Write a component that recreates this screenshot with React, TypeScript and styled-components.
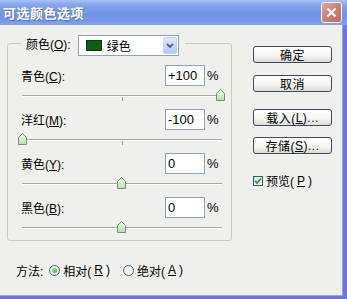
import React from "react";
import styled, { createGlobalStyle } from "styled-components";

const GlobalStyle = createGlobalStyle`
  html, body {
    margin: 0;
    padding: 0;
    background: #efefec;
  }
`;

const Window = styled.div`
  width: 347px;
  height: 299px;
  display: flex;
  flex-direction: column;
  font-family: "Liberation Sans", "Noto Sans CJK SC", sans-serif;
  font-size: 12px;
  color: #000;
  overflow: hidden;
`;

const TitleBar = styled.div`
  height: 25px;
  flex: none;
  display: flex;
  align-items: center;
  justify-content: space-between;
  padding: 0 5px 0 3px;
  box-sizing: border-box;
  background: linear-gradient(to bottom, #a9c2f4 0%, #86a6ec 18%, #7194e4 55%, #7697e6 85%, #8aa8ec 100%);
`;

const Title = styled.span`
  color: #fff;
  font-family: "Noto Sans CJK SC", sans-serif;
  font-weight: bold;
  font-size: 13px;
  letter-spacing: 0.5px;
  text-shadow: 1px 1px 0 #5a74b8;
`;

const CloseButton = styled.div`
  width: 21px;
  height: 21px;
  box-sizing: border-box;
  border: 1px solid #f4f0f4;
  border-radius: 3px;
  background: linear-gradient(135deg, #e3a59c 0%, #cf7f72 50%, #c26a5e 100%);
  display: flex;
  align-items: center;
  justify-content: center;
`;

const Client = styled.div`
  flex: 1;
  display: flex;
  flex-direction: column;
  background: #efefec;
  border-right: 4px solid #6d78d6;
  border-bottom: 3px solid #6d78d6;
  box-shadow: inset -1px -1px 0 #9aa4ea;
`;

const Main = styled.div`
  display: flex;
  align-items: flex-start;
`;

const GroupBox = styled.fieldset`
  margin: 10px 0 0 7px;
  padding: 0 9px 0 13px;
  width: 225px;
  box-sizing: border-box;
  border: 1px solid #c9c9c2;
  border-radius: 3px;
  min-width: 0;
`;

const Legend = styled.legend`
  padding: 0 6px 0 5px;
  height: 16px;
  display: flex;
  align-items: flex-start;
  gap: 7px;
`;

const LegendLabel = styled.span`
  line-height: 21px;
  margin-bottom: -5px;
`;

const Select = styled.div`
  width: 101px;
  height: 21px;
  margin-bottom: -5px;
  box-sizing: border-box;
  border: 1px solid #8aa4c0;
  background: #fff;
  display: flex;
  align-items: center;
  padding: 0 1px 0 7px;
`;

const Swatch = styled.span<{ $color: string }>`
  width: 16px;
  height: 11px;
  background: ${(p) => p.$color};
  border: 1px solid #1d2a1d;
  box-sizing: border-box;
  margin-right: 5px;
`;

const SelectText = styled.span`
  flex: 1;
  font-family: "Noto Sans CJK SC", sans-serif;
`;

const DropButton = styled.span`
  width: 14px;
  height: 17px;
  border-radius: 2px;
  background: linear-gradient(to bottom, #dce7fd, #b5c9f5);
  border: 1px solid #c3d3f8;
  box-sizing: border-box;
  display: flex;
  align-items: center;
  justify-content: center;
`;

const Rows = styled.div`
  display: flex;
  flex-direction: column;
  gap: 1px;
  padding-top: 14px;
`;

const Block = styled.div`
  display: flex;
  flex-direction: column;
`;

const ValueRow = styled.div`
  height: 21px;
  display: flex;
  align-items: center;
`;

const RowLabel = styled.span`
  flex: 1;
`;

const NumberBox = styled.div`
  width: 40px;
  height: 21px;
  box-sizing: border-box;
  border: 1px solid #8aa4c0;
  background: #fff;
  padding: 0 2px;
  display: flex;
  align-items: center;
  font-family: "Liberation Sans", sans-serif;
  font-size: 13px;
`;

const Percent = styled.span`
  width: 15px;
  margin-left: 2px;
  text-align: left;
  font-family: "Liberation Sans", sans-serif;
  font-size: 13px;
`;

const SliderArea = styled.div`
  position: relative;
  height: 22px;
  margin-left: 1px;
  width: 200px;
`;

const Track = styled.div`
  margin-top: 9px;
  height: 1px;
  border-top: 1px solid #a8a8a2;
  background: #fff;
`;

const Tick = styled.span`
  position: absolute;
  left: 100px;
  top: 11px;
  width: 1px;
  height: 4px;
  background: #9a9a94;
`;

const Thumb = styled.svg`
  position: absolute;
  top: 3px;
  width: 9px;
  height: 12px;
`;

const Buttons = styled.div`
  margin-left: 21px;
  padding-top: 21px;
  width: 79px;
  display: flex;
  flex-direction: column;
`;

const Button = styled.div<{ $gap: number }>`
  height: 17px;
  margin-top: ${(p) => p.$gap}px;
  box-sizing: border-box;
  border: 1px solid #3b4a66;
  border-radius: 3px;
  background: linear-gradient(to bottom, #ffffff 0%, #f4f4f0 60%, #dcdcd4 100%);
  display: flex;
  align-items: center;
  justify-content: center;
  letter-spacing: 0.5px;
`;

const CheckRow = styled.label`
  margin-top: 18px;
  display: flex;
  align-items: center;
  gap: 3px;
`;

const CheckBox = styled.span`
  width: 10px;
  height: 10px;
  box-sizing: border-box;
  border: 1px solid #2a5a8a;
  background: linear-gradient(135deg, #e2e2da, #fbfbf8);
  display: flex;
  align-items: center;
  justify-content: center;
`;

const MethodRow = styled.div`
  margin-top: 21px;
  padding-left: 16px;
  height: 16px;
  display: flex;
  align-items: center;
`;

const MethodLabel = styled.span`
  margin-right: 6px;
`;

const RadioOption = styled.span`
  display: flex;
  align-items: center;
  gap: 3px;
  margin-right: 13px;
`;

const RadioCircle = styled.span<{ $on?: boolean }>`
  width: 11px;
  height: 11px;
  box-sizing: border-box;
  border-radius: 50%;
  border: 1px solid #3c6a98;
  background: radial-gradient(circle at 65% 65%, #ffffff, #dcdcd4);
  display: flex;
  align-items: center;
  justify-content: center;
  &::after {
    content: "";
    display: ${(p) => (p.$on ? "block" : "none")};
    width: 5px;
    height: 5px;
    border-radius: 50%;
    background: radial-gradient(circle at 35% 35%, #9fe39f, #2f9a2f);
  }
`;

const sliders = [
  { label: "青色", key: "C", value: "+100", v: 100 },
  { label: "洋红", key: "M", value: "-100", v: -100 },
  { label: "黄色", key: "Y", value: "0", v: 0 },
  { label: "黑色", key: "B", value: "0", v: 0 },
];

const ThumbIcon: React.FC<{ left: number }> = ({ left }) => (
  <Thumb viewBox="0 0 9 12" style={{ left }}>
    <defs>
      <linearGradient id="tg" x1="0" y1="0" x2="0" y2="1">
        <stop offset="0" stopColor="#f4fbf0" />
        <stop offset="1" stopColor="#b9dcb0" />
      </linearGradient>
    </defs>
    <polygon points="0.5,4.5 4.5,0.5 8.5,4.5 8.5,11.5 0.5,11.5" fill="url(#tg)" stroke="#6f946a" />
  </Thumb>
);

const App: React.FC = () => {
  return (
    <>
      <GlobalStyle />
      <Window>
        <TitleBar>
          <Title>可选颜色选项</Title>
          <CloseButton>
            <svg width="11" height="11" viewBox="0 0 11 11">
              <path d="M1.5 1.5 L9.5 9.5 M9.5 1.5 L1.5 9.5" stroke="#fff" strokeWidth="2.2" />
            </svg>
          </CloseButton>
        </TitleBar>
        <Client>
          <Main>
            <GroupBox>
              <Legend>
                <LegendLabel>
                  颜色(<u>O</u>):
                </LegendLabel>
                <Select>
                  <Swatch $color="#0b610b" />
                  <SelectText>绿色</SelectText>
                  <DropButton>
                    <svg width="8" height="6" viewBox="0 0 8 6">
                      <path d="M1 1 L4 4 L7 1" fill="none" stroke="#4d6185" strokeWidth="1.8" />
                    </svg>
                  </DropButton>
                </Select>
              </Legend>
              <Rows>
                {sliders.map((s) => (
                  <Block key={s.key}>
                    <ValueRow>
                      <RowLabel>
                        {s.label}(<u>{s.key}</u>):
                      </RowLabel>
                      <NumberBox>{s.value}</NumberBox>
                      <Percent>%</Percent>
                    </ValueRow>
                    <SliderArea>
                      <Track />
                      <Tick />
                      <ThumbIcon left={Math.round(((s.v + 100) / 200) * 198) - 4} />
                    </SliderArea>
                  </Block>
                ))}
              </Rows>
            </GroupBox>
            <Buttons>
              <Button $gap={0}>确定</Button>
              <Button $gap={12}>取消</Button>
              <Button $gap={17}>
                载入(<u>L</u>)...
              </Button>
              <Button $gap={11}>
                存储(<u>S</u>)...
              </Button>
              <CheckRow>
                <CheckBox>
                  <svg width="8" height="8" viewBox="0 0 8 8">
                    <path d="M1 4 L3 6 L7 1.5" fill="none" stroke="#21a121" strokeWidth="1.8" />
                  </svg>
                </CheckBox>
                预览(<u>P</u>)
              </CheckRow>
            </Buttons>
          </Main>
          <MethodRow>
            <MethodLabel>方法:</MethodLabel>
            <RadioOption>
              <RadioCircle $on />
              相对(<u>R</u>)
            </RadioOption>
            <RadioOption>
              <RadioCircle />
              绝对(<u>A</u>)
            </RadioOption>
          </MethodRow>
        </Client>
      </Window>
    </>
  );
};

export default App;
